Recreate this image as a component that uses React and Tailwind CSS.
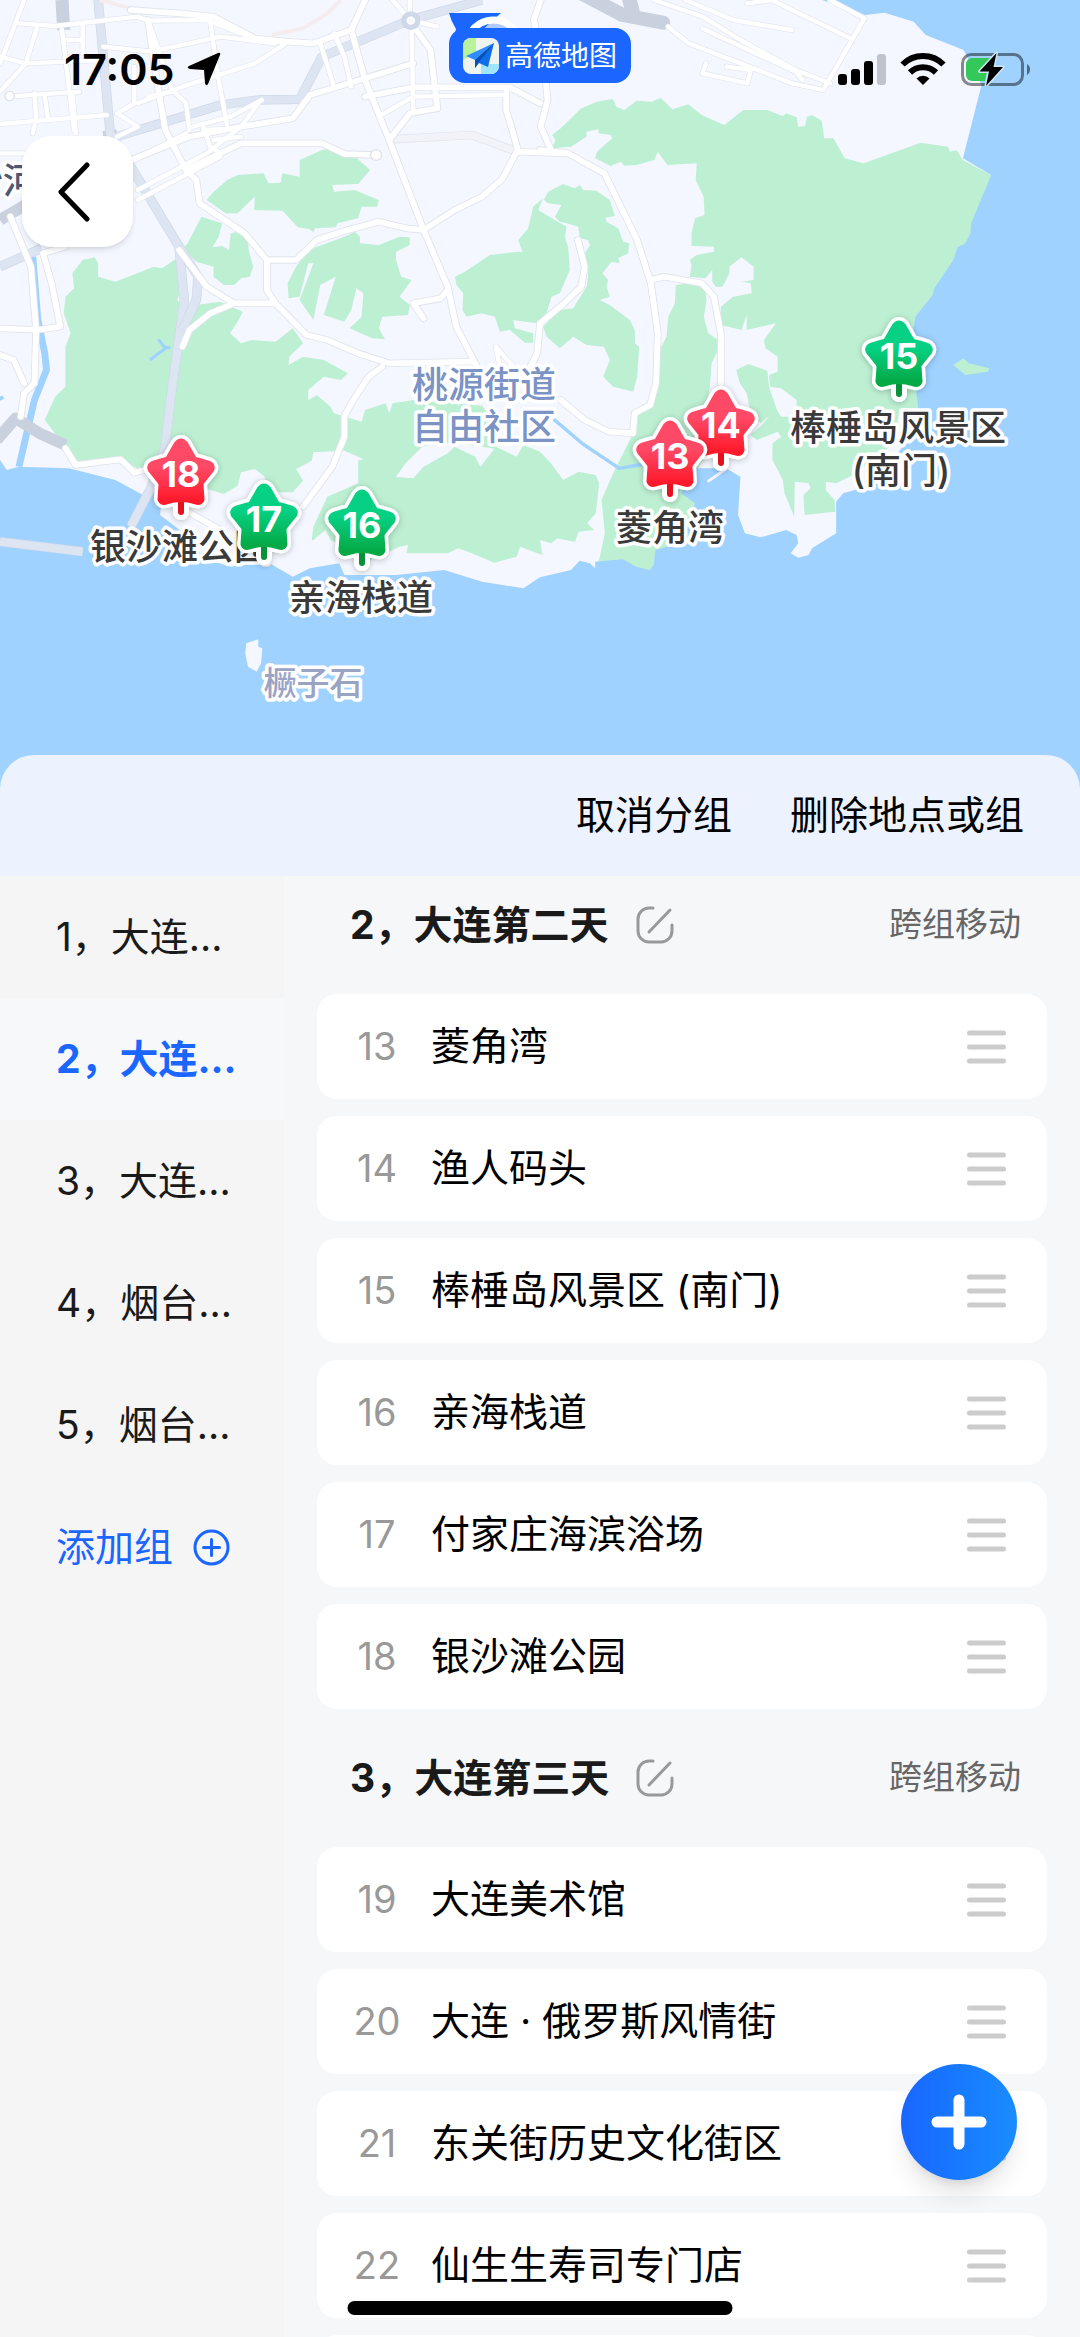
import React, { useState } from "react";

const groups = [
  { id: 1, label: "1，大连..." },
  { id: 2, label: "2，大连..." },
  { id: 3, label: "3，大连..." },
  { id: 4, label: "4，烟台..." },
  { id: 5, label: "5，烟台..." },
];

const days = [
  {
    title: "2，大连第二天",
    places: [
      { no: 13, name: "菱角湾" },
      { no: 14, name: "渔人码头" },
      { no: 15, name: "棒棰岛风景区 (南门)" },
      { no: 16, name: "亲海栈道" },
      { no: 17, name: "付家庄海滨浴场" },
      { no: 18, name: "银沙滩公园" },
    ],
  },
  {
    title: "3，大连第三天",
    places: [
      { no: 19, name: "大连美术馆" },
      { no: 20, name: "大连 · 俄罗斯风情街" },
      { no: 21, name: "东关街历史文化街区" },
      { no: 22, name: "仙生生寿司专门店" },
    ],
  },
];

// terrain paths use their own grid, scaled down to the map inside <MapView>
const parks = [
  "M600 600 L620 575 660 540 690 525 765 520 780 550 815 548 820 520 870 530 870 480 940 448 1020 460 1075 510 1040 552 965 555 970 575 1030 570 1100 600 1095 620 1050 620 1040 655 980 670 975 682 915 685 910 697 900 688 865 682 820 632 738 630 740 590 690 640 655 640Z",
  "M585 650 L645 670 635 710 617 742 645 738 665 750 670 700 690 695 720 710 722 750 735 800 725 830 700 835 680 855 650 855 620 830 620 800 570 785 530 745 545 730Z",
  "M895 750 L1000 710 1030 695 1045 710 1045 730 1100 735 1160 710 1190 712 1190 735 1150 755 1150 780 1165 830 1195 840 1160 890 1190 915 1185 945 1110 950 1100 985 1118 1018 1080 1015 1015 985 1050 950 1055 880 1035 865 1020 930 1000 965 940 945 975 830 930 855 910 960 870 900 910 790 895 790 870 890 838 895 835 850 860 800Z",
  "M190 890 L215 865 210 820 240 780 275 772 285 790 285 830 335 845 410 815 445 800 470 805 520 770 530 850 515 900 530 920 640 905 705 935 690 965 668 1000 700 1030 730 1020 800 1025 850 985 880 1030 840 1070 838 1095 880 1070 940 1080 1010 1120 990 1140 940 1130 895 1170 895 1200 920 1185 960 1220 970 1240 1050 1265 1060 1230 1120 1210 1130 1240 1140 1210 1200 1200 1400 1217 1450 1287 1440 1347 1320 1327 1230 1337 1180 1387 1145 1437 1040 1457 1040 1382 1055 1377 1000 1352 910 1357 905 1382 860 1407 880 1442 850 1477 770 1477 770 1432 740 1407 700 1417 690 1457 650 1482 600 1467 450 1427 400 1407 355 1377 330 1392 230 1392 195 1357 190 1327 165 1307 130 1260 160 1190 190 1160 190 1040 205 1000 185 940Z",
  "M905 1620 L910 1580 950 1490 1040 1450 1140 1430 1200 1435 1230 1400 1300 1360 1320 1340 1380 1370 1395 1400 1440 1340 1500 1370 1520 1335 1568 1355 1600 1390 1635 1440 1680 1415 1730 1425 1740 1450 1730 1540 1705 1570 1725 1590 1680 1595 1670 1625 1640 1620 1620 1615 1600 1630 1568 1620 1575 1665 1510 1640 1500 1670 1435 1688 1370 1660 1330 1645 1300 1660 1180 1660 1185 1635 1160 1640 1100 1670 1050 1690 1000 1640 960 1620 945 1590 910 1620Z",
];

const eastParks = [
  "M35 405 L60 385 120 325 165 305 212 297 222 320 245 330 280 302 325 305 350 293 385 328 430 313 470 345 535 375 590 330 660 330 705 348 715 340 745 352 750 380 770 378 775 350 790 345 818 362 825 415 852 415 885 475 940 490 1105 428 1185 440 1190 455 1210 450 1228 480 1310 525 1290 750 1140 950 1098 1040 1098 1225 745 1225 745 1200 700 1165 668 1160 665 1125 690 1115 690 1070 655 1045 650 1020 685 970 600 990 600 945 585 990 525 975 525 920 560 890 615 880 612 850 585 845 620 840 620 800 585 772 550 800 550 820 530 860 510 860 500 845 500 810 480 835 435 830 440 795 435 780 455 765 505 755 505 740 440 738 440 700 450 655 478 645 475 590 452 540 455 490 370 495 342 455 332 480 280 495 245 497 235 485 205 498 160 475 165 455 210 415 205 405 170 400 170 388 135 395 135 410 90 440 35 445 45 420Z",
  "M570 1110 L605 1092 660 1112 665 1160 688 1230 640 1270 610 1230 600 1180 580 1150Z",
  "M745 1180 L1098 1180 1098 1220 1045 1215 1030 1330 900 1430 860 1450 830 1445 830 1470 855 1500 858 1535 768 1545 765 1485 785 1465 780 1450 740 1445 738 1550 710 1480 705 1440 675 1380 675 1330 700 1310 690 1295 630 1320 610 1305 640 1280 685 1225 700 1250 725 1250 748 1220Z",
];

const centerParks = [
  "M165 470 L195 455 270 405 355 395 368 395 355 360 385 325 400 260 430 235 415 270 465 300 500 320 495 350 505 380 510 450 480 520 455 530 440 580 410 610 340 600 345 625 400 640 400 668 375 668 330 630 300 635 285 590 245 580 200 590 188 570 190 520 170 495Z",
  "M432 240 L445 215 490 192 525 205 540 195 550 210 590 212 630 240 645 288 617 293 620 305 655 325 670 365 688 370 685 400 655 415 660 430 635 425 608 460 625 480 620 500 630 530 600 540 630 555 690 600 705 630 705 670 718 680 712 770 700 815 640 800 610 770 630 720 612 680 560 675 520 650 480 685 440 650 430 620 450 600 480 570 520 565 560 500 565 470 555 400 570 375 565 360 540 355 535 320 500 310 480 305 465 290 485 255 445 250Z",
  "M828 495 L870 490 915 505 920 540 912 590 925 640 955 660 950 700 935 730 930 800 920 860 915 1010 850 1120 880 1140 960 1180 900 1290 790 1300 765 1310 761 1353 745 1365 680 1340 590 1343 600 1310 615 1240 605 1140 640 1060 700 940 710 890 750 850 775 700 800 650 805 590 825 550Z",
];

const sea = [
  "M2388 0 L2513 45 2568 38 2653 65 2688 105 2798 150 2850 255 2796 475 2878 525 2820 670 2818 700 2803 730 2780 742 2768 780 2713 865 2708 885 2658 950 2645 1040 2666 1220 3136 1220 3136 0Z",
  "M2666 1200 L2666 1220 2620 1340 2600 1370 2553 1450 2448 1480 2428 1505 2428 1600 2358 1645 2348 1665 2318 1673 2296 1660 2318 1630 2313 1605 2283 1590 2208 1612 2163 1600 2143 1545 2150 1430 2108 1405 2018 1405 1978 1480 2018 1510 2000 1570 1980 1620 1923 1645 1903 1650 1898 1695 1886 1710 1848 1700 1808 1678 1728 1685 1728 1705 1713 1690 1683 1682 1658 1710 1568 1732 1520 1765 1400 1745 1290 1710 1150 1725 1000 1725 985 1690 900 1705 850 1730 800 1700 770 1680 670 1700 590 1675 560 1620 465 1545 470 1480 445 1465 415 1485 335 1440 200 1405 55 1400 20 1410 0 1380V2400H3136V1200Z",
];

const mainRoads = [
  "M1060 0 L1020 90 910 130 830 125 740 115 620 50 520 40 380 30",
  "M1020 90 L1060 240 1130 420 1230 690 1300 860 1325 980 1385 1100",
  "M1640 460 L1500 455 1460 535 1400 590 1320 630 1230 690 1180 685 1100 665 1010 690 920 720 860 780 775 780 710 700 580 610 570 540 540 510 480 390 455 240 430 60",
  "M775 780 L775 870 800 910 890 1005 950 1020 1040 1060 1130 1090 1370 1085",
  "M800 910 L680 910 600 860 520 750",
  "M680 910 L610 940 550 990 530 1040",
  "M1110 1100 L1070 1130 1020 1210 1000 1250 1000 1310 965 1400 880 1520",
  "M1568 450 L1650 460 1710 495 1755 520 1850 720 1890 850 1910 1000 1905 1150 1888 1215 1843 1240 1838 1300 1768 1295 1698 1260 1628 1200",
  "M1888 840 L1928 830 2038 850 2073 890 2093 1000 2093 1180",
  "M1678 720 L1698 800 1688 860 1638 910 1568 970 1560 1060 1540 1100",
  "M1470 270 L1470 330 1490 400 1505 455",
  "M1600 450 L1570 380 1590 300 1580 190 1550 60 1570 0",
  "M550 505 L700 430 935 430 1000 462 1090 465",
  "M380 480 L550 410 700 380 850 355 900 285 1060 235 1200 190",
  "M1130 420 L1190 340 1270 325 1250 150 1195 70",
  "M1060 290 L1200 262 1480 262 1568 310",
  "M1300 870 L1280 895 1200 910 1230 955",
  "M0 985 L110 990 175 980 150 850 125 760 190 740",
  "M105 990 L100 1150 70 1180 60 1250",
  "M30 650 L90 800 105 990",
  "M0 1065 L40 1080 70 1150",
  "M190 1345 L220 1395 350 1378 390 1418 420 1410",
  "M545 1535 L640 1590",
];

const streets = [
  "M1100 350 L1200 290 1470 285",
  "M1200 330 L1195 80",
  "M70 0 L30 110 0 190",
  "M55 70 L160 78 400 50 430 62 600 60 760 125",
  "M0 170 L75 190 300 180",
  "M110 75 L75 190 0 275",
  "M240 75 L240 160 M190 120 H240",
  "M100 280 L105 360 95 400 M210 280 L220 400 M130 290 L140 360",
  "M25 290 L230 275 M0 372 L310 345 M0 460 H70",
  "M180 90 L215 390",
  "M390 200 L390 310 340 340 M340 340 L400 380 340 410",
  "M300 140 L440 155 640 110 800 130",
  "M400 310 L530 260 740 190 830 130",
  "M500 270 L540 310 550 390 M610 60 L630 210 660 380",
  "M430 60 L500 270 M430 290 L500 275",
  "M590 380 L610 440 640 460 M560 380 L670 350 760 300",
  "M400 570 L600 460 700 380 750 310",
  "M400 600 L640 470 M590 390 L690 385 M620 420 L700 410",
  "M930 130 L970 260 M970 100 L1000 170 1020 260",
  "M390 480 L540 400",
  "M1140 0 L1190 60 1190 0 M1190 60 L1270 80",
  "M1440 1040 L1490 1100 M1440 1040 L1450 1095",
  "M1940 80 L2000 130 2100 170 2300 250 2390 270 2510 55 2410 0",
  "M1900 0 L2040 50 2150 120 2310 210 2410 250",
  "M1990 0 L2130 60 2300 90",
  "M2170 10 L2240 0 2340 50 2470 115",
  "M2040 85 L2090 110 2310 215 2330 240",
  "M2050 190 L2040 220 2170 250 2180 210 2110 200",
];

const expressways = [
  "M285 0 L320 400 380 500 520 740 535 900 495 1200 480 1340 440 1460 380 1580",
  "M340 410 L450 375 640 315 750 300 870 298 935 170 1190 60 1400 0",
  "M520 740 L575 830 570 900 530 990",
  "M0 800 L120 745",
  "M0 1625 L240 1655",
];

const pins = [
  { no: 14, x: 721, y: 390, color: "red" },
  { no: 13, x: 670, y: 421, color: "red" },
  { no: 15, x: 899, y: 321, color: "green" },
  { no: 18, x: 181, y: 439, color: "red" },
  { no: 17, x: 264, y: 484, color: "green" },
  { no: 16, x: 362, y: 490, color: "green" },
];

const labels = [
  { text: "银沙滩公园", x: 180, y: 560 },
  { text: "亲海栈道", x: 361, y: 611 },
  { text: "菱角湾", x: 670, y: 541 },
  { text: "棒棰岛风景区", x: 898, y: 441 },
  { text: "(南门)", x: 901, y: 484 },
];

const Pin = ({ no, x, y, color }) => {
  const star =
    "M-3 6 Q0 2 3 6 L11 20 Q13 23 17 23 L27 26 Q31 28 28 31 L20 41 Q18 43 18 46 L19 60 Q18 62 15 61 Q0 56 -15 61 Q-18 62 -19 60 L-18 46 Q-18 43 -20 41 L-28 31 Q-31 28 -27 26 L-17 23 Q-13 23 -11 20Z";
  const fill = color === "red" ? "url(#pinRed)" : "url(#pinGreen)";
  return (
    <g transform={`translate(${x} ${y})`} strokeLinejoin="round" strokeLinecap="round">
      <path d={`${star} M0 66 V73`} fill="#fff" stroke="#fff" strokeWidth="16" filter="url(#pinShadow)" />
      <path d="M0 64 V73" stroke={color === "red" ? "#e60f1e" : "#08913a"} strokeWidth="6" />
      <path d={star} fill={fill} stroke={fill} strokeWidth="9" />
      <text y="48" textAnchor="middle" fill="#fff" className="text-[36px] font-bold">
        {no}
      </text>
    </g>
  );
};

const MapView = () => {
  return (
    <svg viewBox="0 0 1080 800" className="block w-full shrink-0 bg-[#f4f7ff]">
      <defs>
        <linearGradient id="pinRed" x1="0" y1="0" x2="0" y2="1">
          <stop offset="0.4" stopColor="#ff4a67" />
          <stop offset="1" stopColor="#ff1a2b" />
        </linearGradient>
        <linearGradient id="pinGreen" x1="0" y1="0" x2="0" y2="1">
          <stop offset="0.4" stopColor="#06d083" />
          <stop offset="1" stopColor="#05a945" />
        </linearGradient>
        <filter id="pinShadow" x="-30%" y="-30%" width="160%" height="160%">
          <feDropShadow dx="0" dy="1" stdDeviation="3" floodOpacity="0.25" />
        </filter>
      </defs>

      <g transform="scale(0.34439 0.33333)" strokeLinejoin="round" fill="none">
        <g fill="#bdf0d3">
          {parks.map((d) => (
            <path key={d} d={d} />
          ))}
          <g transform="translate(1568 0)">
            {eastParks.map((d) => (
              <path key={d} d={d} />
            ))}
          </g>
          <g transform="translate(1161 360) scale(0.968 1)">
            {centerParks.map((d) => (
              <path key={d} d={d} />
            ))}
          </g>
        </g>

        {sea.map((d) => (
          <path key={d} d={d} fill="#9fd2ff" />
        ))}
        <path d="M2768 1095 L2798 1075 2813 1090 2873 1105 2868 1115 2803 1125Z" fill="#bdf0d3" />
        <path d="M715 1930 L750 1918 750 1940 762 1945 758 1990 745 2015 720 2000 712 1960Z" fill="#f4f7ff" />
        <path d="M2055 1445 L2110 1405" stroke="#f4f7ff" strokeWidth="8" />

        <g stroke="#9fd2ff">
          <path d="M95 770 L110 960 130 1060 135 1110 100 1200 55 1400" strokeWidth="20" />
          <path d="M1608 1258 L1690 1330 1798 1405 1870 1392" strokeWidth="10" />
          <path d="M435 1080 L480 1045 460 1018 M475 1040 L495 1045" strokeWidth="9" />
          <path d="M0 1190 L5 1200" strokeWidth="16" />
        </g>

        <g stroke="#c9d1de">
          <path d="M180 0 L185 90" strokeWidth="38" />
          <path d="M1688 -20 L1808 45 1925 68 M1828 0 L1838 40" strokeWidth="42" strokeLinecap="round" />
          <path d="M0 660 L90 605 M300 410 L340 405" strokeWidth="34" />
          <path d="M-10 1320 L45 1255 115 1300 190 1335" strokeWidth="34" />
        </g>

        {expressways.map((d) => (
          <g key={d}>
            <path d={d} stroke="#cfd8e8" strokeWidth="28" />
            <path d={d} stroke="#dde5f3" strokeWidth="24" />
          </g>
        ))}
        <path d="M290 0 L400 30 590 50 M790 105 L880 85 950 40 990 0" stroke="#f5ecee" strokeWidth="12" />
        <path d="M1135 418 L1370 405 1500 455" stroke="#e3e5eb" strokeWidth="26" />
        <path d="M1135 418 L1370 405 1500 455" stroke="#f1f3f8" strokeWidth="21" />

        <g strokeLinecap="round">
          {streets.map((d) => (
            <path key={d} d={d} stroke="#e3e6ee" strokeWidth="17" />
          ))}
          {mainRoads.map((d) => (
            <path key={d} d={d} stroke="#e0e3eb" strokeWidth="22" />
          ))}
          {streets.map((d) => (
            <path key={d} d={d} stroke="#fff" strokeWidth="13" />
          ))}
          {mainRoads.map((d) => (
            <path key={d} d={d} stroke="#fff" strokeWidth="17" />
          ))}
        </g>
        <circle cx="1193" cy="62" r="28" fill="#cfd8e8" />
        <circle cx="1193" cy="62" r="10" fill="#f4f7ff" stroke="#fff" strokeWidth="5" />
        <circle cx="1092" cy="465" r="16" fill="#fff" stroke="#dfe2ea" strokeWidth="4" />
        <circle cx="28" cy="288" r="14" fill="#fff" stroke="#dfe2ea" strokeWidth="4" />
      </g>

      <g className="text-[36px] font-medium" stroke="#fff" strokeWidth="7" strokeLinejoin="round" paintOrder="stroke">
        <text x="-33" y="194" fill="#4d5872">沙河</text>
        <g fill="#7b93c5" textAnchor="middle">
          <text x="484" y="398">桃源街道</text>
          <text x="484" y="440">自由社区</text>
        </g>
        <text x="313" y="695" fill="#9ba3c4" textAnchor="middle" className="text-[33px]">
          橛子石
        </text>
        {labels.map((label) => (
          <text key={label.text} x={label.x} y={label.y} fill="#3a3a3a" textAnchor="middle">
            {label.text}
          </text>
        ))}
      </g>

      {pins.map((pin) => (
        <Pin key={pin.no} {...pin} />
      ))}
    </svg>
  );
};

const StatusIcons = () => {
  return (
    <svg width="194" height="34" viewBox="0 0 194 34">
      <rect x="0" y="22" width="9" height="11" rx="3" />
      <rect x="13" y="17" width="9" height="16" rx="3" />
      <rect x="26" y="9" width="9" height="24" rx="3" />
      <rect x="39" y="2" width="9" height="31" rx="3" fill="#c0c2cc" />
      <g fill="none" stroke="#000" strokeWidth="6">
        <path d="M64.500 12.500 A29 29 0 0 1 105.500 12.500" />
        <path d="M72 20.500 A18.500 18.500 0 0 1 98 20.500" />
      </g>
      <path d="M85 33 L78.500 26.500 A9 9 0 0 1 91.500 26.500Z" />
      <rect x="124.500" y="2.500" width="60" height="30" rx="9" fill="none" stroke="#000" strokeOpacity="0.45" strokeWidth="3" />
      <path d="M189 12 a6.500 6.500 0 0 1 0 11Z" fillOpacity="0.5" />
      <path d="M134 6 H152 L147 29 H134 a6 6 0 0 1 -6 -6 V12 a6 6 0 0 1 6 -6Z" fill="#34c759" />
      <path d="M158.500 1 L141.500 19.500 H151 L148 34 L165 15 H155.500Z" stroke="#cfe6f5" strokeWidth="3" paintOrder="stroke" strokeLinejoin="round" />
    </svg>
  );
};

const BrandBadge = () => {
  return (
    <div className="absolute top-7 left-1/2 -translate-x-1/2">
      <svg width="80" height="30" viewBox="0 0 80 30" className="absolute -top-4 left-0">
        <path d="M0 1 H52 L20 30 H4 L7 17 Q2 9 0 1Z" fill="#1a66ff" />
        <path d="M22 20 A27 27 0 0 1 67 20 V30 H22Z" fill="#1a66ff" fillOpacity="0.3" />
        <path d="M22 20 A27 27 0 0 1 67 20" fill="none" stroke="#fff" strokeWidth="7" />
      </svg>
      <div className="relative flex h-[55px] items-center gap-1.5 rounded-2xl bg-[#1a66ff] px-3.5">
        <svg width="36" height="36" viewBox="0 0 36 36">
          <clipPath id="logoClip">
            <rect width="36" height="36" rx="8" />
          </clipPath>
          <g clipPath="url(#logoClip)">
            <rect width="36" height="36" fill="#eef5ee" />
            <path d="M0 0 H13 V15 L0 22Z" fill="#b9f29a" />
            <path d="M18 26 H36 V36 H18Z" fill="#9fe6fb" />
            <path d="M31 5 L3 18 L12 22Z" fill="#2f8dff" />
            <path d="M31 5 L12 22 V30 L16 25 L25 29Z" fill="#0f6fe8" />
            <path d="M31 5 L12 22 V30 L16 24Z" fill="#0a4fb8" />
          </g>
        </svg>
        <span className="text-[28px] leading-8 text-white">高德地图</span>
      </div>
    </div>
  );
};

const PlaceRow = ({ no, name }) => {
  return (
    <li className="flex h-[105px] shrink-0 items-center rounded-[20px] bg-white pr-[41px] pl-[30px]">
      <span className="w-[60px] text-center text-[38px] text-[#999]">{no}</span>
      <span className="ml-[24px] flex-1 truncate text-[39px] text-black">{name}</span>
      <button aria-label={`拖动 ${name}`}>
        <svg width="39" height="34" viewBox="0 0 39 34" stroke="#ccc" strokeWidth="5" strokeLinecap="round">
          <path d="M2.500 3 H36.500 M2.500 17 H36.500 M2.500 31 H36.500" />
        </svg>
      </button>
    </li>
  );
};

const DaySection = ({ title, places, children }) => {
  return (
    <section>
      <div className="flex h-[138px] items-center pr-[26px] pl-[33px]">
        <h2 className="text-[39px] font-bold text-[#1a1a1a]">{title}</h2>
        <button aria-label="编辑" className="ml-[27px]">
          <svg width="38" height="38" viewBox="0 0 38 38" fill="none" stroke="#999" strokeWidth="3" strokeLinecap="round">
            <path d="M17 2 H13 A11 11 0 0 0 2 13 V25 A11 11 0 0 0 13 36 H25 A11 11 0 0 0 36 25 V19" />
            <path d="M13 26 L34 4" />
          </svg>
        </button>
        <button className="ml-auto text-[33px] text-[#666]">跨组移动</button>
      </div>
      <ul className="flex flex-col gap-[17px]">
        {places.map((place) => (
          <PlaceRow key={place.no} {...place} />
        ))}
        {children}
      </ul>
    </section>
  );
};

const App = () => {
  const [active, setActive] = useState(2);

  return (
    <div className="relative flex h-screen flex-col overflow-hidden bg-[#f6f7f9] font-['Inter','Noto_Sans_CJK_SC',sans-serif]">
      <MapView />

      <header className="absolute inset-x-0 top-0">
        <div className="flex items-center justify-between pt-[48px] pr-[48px] pl-[64px]">
          <div className="flex items-center gap-3">
            <span className="text-[43px] leading-[42px] font-semibold">17:05</span>
            <svg width="34" height="34" viewBox="0 0 34 34">
              <path d="M31 1 Q34 0 33 3 L21 32 Q19 35 18 31 L17 18 L3 17 Q-1 16 2 14Z" />
            </svg>
          </div>
          <StatusIcons />
        </div>
        <BrandBadge />
        <button
          aria-label="返回"
          className="mt-[46px] ml-[22px] flex size-[111px] items-center justify-center rounded-[30px] bg-white pr-2 shadow-md"
        >
          <svg width="34" height="60" viewBox="0 0 34 60" fill="none" stroke="#000" strokeWidth="5" strokeLinecap="round" strokeLinejoin="round">
            <path d="M30 3 L4 30 L30 57" />
          </svg>
        </button>
      </header>

      <main className="relative -mt-[45px] flex min-h-0 flex-1 flex-col">
        <div className="flex h-[121px] shrink-0 items-center justify-end gap-[58px] rounded-t-[34px] bg-[#edf2ff] pr-[56px] text-[39px]">
          <button>取消分组</button>
          <button>删除地点或组</button>
        </div>

        <div className="flex min-h-0 flex-1">
          <nav className="flex w-[284px] shrink-0 flex-col bg-[#f5f5f5] text-[39px] text-[#1a1a1a]">
            {groups.map((group) => (
              <button
                key={group.id}
                onClick={() => setActive(group.id)}
                className={
                  active === group.id
                    ? "h-[122px] bg-[#f6f8fa] pl-[56px] text-left font-bold text-[#1a66ff]"
                    : "h-[122px] pl-[56px] text-left"
                }
              >
                {group.label}
              </button>
            ))}
            <button className="flex h-[122px] items-center gap-5 pl-[56px] text-[#1a66ff]">
              添加组
              <svg width="37" height="37" viewBox="0 0 37 37" fill="none" stroke="#1a66ff" strokeWidth="3" strokeLinecap="round">
                <circle cx="18.500" cy="18.500" r="16.500" />
                <path d="M18.500 10.500 V26.500 M10.500 18.500 H26.500" />
              </svg>
            </button>
          </nav>

          <div className="min-w-0 flex-1 overflow-hidden px-[33px]">
            <div className="-mt-5">
              <DaySection {...days[0]} />
              <DaySection {...days[1]}>
                <li className="h-[105px] shrink-0 rounded-[20px] bg-white" />
              </DaySection>
            </div>
          </div>
        </div>
      </main>

      <button
        aria-label="添加地点"
        className="absolute right-[63px] bottom-[157px] flex size-[116px] items-center justify-center rounded-full bg-linear-to-r from-[#1a66ff] to-[#1a8cff] shadow-xl"
      >
        <svg width="56" height="56" viewBox="0 0 56 56" stroke="#fff" strokeWidth="11" strokeLinecap="round">
          <path d="M28 6 V50 M6 28 H50" />
        </svg>
      </button>
      <div className="absolute bottom-[22px] left-1/2 h-3.5 w-[385px] -translate-x-1/2 rounded-full bg-black" />
    </div>
  );
};

export default App;
